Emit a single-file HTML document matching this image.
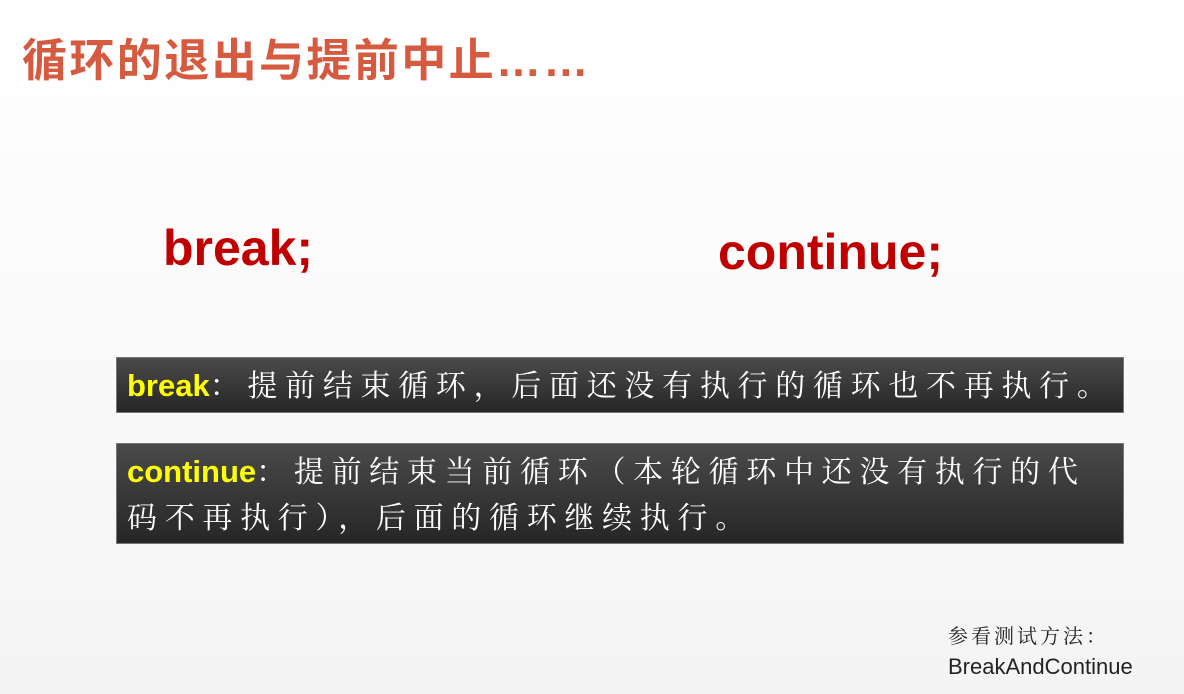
<!DOCTYPE html>
<html><head><meta charset="utf-8"><style>
html,body{margin:0;padding:0}
body{width:1184px;height:694px;position:relative;overflow:hidden;background:linear-gradient(#ffffff,#f4f4f4);font-family:"Liberation Sans","Noto Sans CJK SC",sans-serif}
.t{position:absolute;left:22px;top:24px;font-size:45px;font-weight:bold;color:#d55a3f;letter-spacing:2.4px;white-space:nowrap}
.k{position:absolute;font-size:50px;font-weight:bold;color:#c00000;white-space:nowrap}
.box{position:absolute;left:116px;width:1008px;background:linear-gradient(#4a4a4a,#262626);border:1px solid #777;box-sizing:border-box;color:#fff;font-family:"Liberation Serif","Noto Serif CJK SC",serif;font-size:30px;letter-spacing:7.7px;padding-left:10px;white-space:nowrap}
.y{color:#ffff00;font-family:"Liberation Sans","Noto Sans CJK SC",sans-serif;letter-spacing:0;font-size:31px;font-weight:bold}
.r{position:absolute;left:948px;top:621px;font-size:22px;color:#222;line-height:29px}
</style></head><body>
<div class="t">循环的退出与提前中止……</div>
<div class="k" style="left:163px;top:219px">break;</div>
<div class="k" style="left:718px;top:223px">continue;</div>
<div class="box" style="top:357px;height:56px;line-height:56px"><span class="y">break</span>：提前结束循环，后面还没有执行的循环也不再执行。</div>
<div class="box" style="top:443px;height:101px;line-height:46px;padding-top:5px"><span class="y">continue</span>：提前结束当前循环（本轮循环中还没有执行的代<br>码不再执行），后面的循环继续执行。</div>
<div class="r"><span style="font-family:'Liberation Serif','Noto Serif CJK SC',serif;letter-spacing:3px;font-size:20px">参看测试方法：</span><br>BreakAndContinue</div>
</body></html>
